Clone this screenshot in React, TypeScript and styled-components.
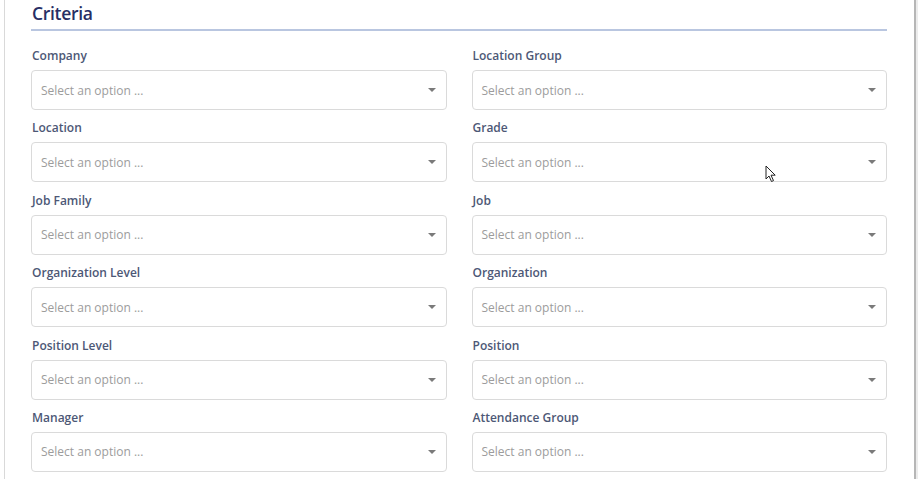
import React, { FC } from "react";
import styled, { createGlobalStyle } from "styled-components";

const fields: string[] = [
  "Company",
  "Location Group",
  "Location",
  "Grade",
  "Job Family",
  "Job",
  "Organization Level",
  "Organization",
  "Position Level",
  "Position",
  "Manager",
  "Attendance Group",
];

const App: FC = () => {
  return (
    <>
      <GlobalStyle />
      <Frame>
        <Title>Criteria</Title>
        <FieldGrid>
          {fields.map((name) => (
            <Field key={name}>
              <Label>{name}</Label>
              <SelectBox>
                <Placeholder>Select an option ...</Placeholder>
                <Caret />
              </SelectBox>
            </Field>
          ))}
        </FieldGrid>
        <Cursor width="12" height="18" viewBox="0 0 12 18">
          <path
            d="M1 1 L1 14 L4 11 L6.5 16.5 L8.5 15.6 L6 10.2 L10.2 10.2 Z"
            fill="#ffffff"
            stroke="#222"
            strokeWidth="1"
            strokeLinejoin="round"
          />
        </Cursor>
      </Frame>
    </>
  );
};

const GlobalStyle = createGlobalStyle`
  html, body {
    margin: 0;
    padding: 0;
    background: #ffffff;
    overflow: hidden;
    font-family: "Open Sans", "Noto Sans", sans-serif;
  }
`;

const Frame = styled.div`
  position: relative;
  margin-left: 4px;
  width: 912px;
  box-sizing: border-box;
  min-height: 479px;
  padding: 0 27px 20px 26px;
  border-left: 1px solid #d9d9d9;
  border-right: 2px solid #b6b6b6;
  box-shadow: 2px 0 0 #ececec;
  background: #ffffff;
`;

const Title = styled.div`
  font-size: 17.5px;
  line-height: 26px;
  font-weight: 600;
  letter-spacing: -0.3px;
  color: #272e64;
  padding: 0 0 3px 1px;
  border-bottom: 2px solid #b9c6e0;
`;

const FieldGrid = styled.div`
  display: grid;
  grid-template-columns: 1fr 1fr;
  column-gap: 25px;
  row-gap: 8.4px;
  padding-top: 15px;
`;

const Field = styled.div`
  display: flex;
  flex-direction: column;
`;

const Label = styled.div`
  font-size: 12px;
  line-height: 20px;
  font-weight: 600;
  color: #4d5876;
  margin-bottom: 4px;
  padding-left: 1px;
`;

const SelectBox = styled.div`
  height: 40px;
  box-sizing: border-box;
  display: flex;
  align-items: center;
  justify-content: space-between;
  padding: 0 10px 0 9px;
  border: 1px solid #dadada;
  border-radius: 4px;
  background: #ffffff;
`;

const Placeholder = styled.span`
  font-size: 12px;
  color: #9c9c9c;
`;

const Caret = styled.span`
  width: 0;
  height: 0;
  border-left: 4px solid transparent;
  border-right: 4px solid transparent;
  border-top: 4px solid #7a7a7a;
`;

const Cursor = styled.svg`
  position: absolute;
  left: 760px;
  top: 165px;
`;

export default App;
